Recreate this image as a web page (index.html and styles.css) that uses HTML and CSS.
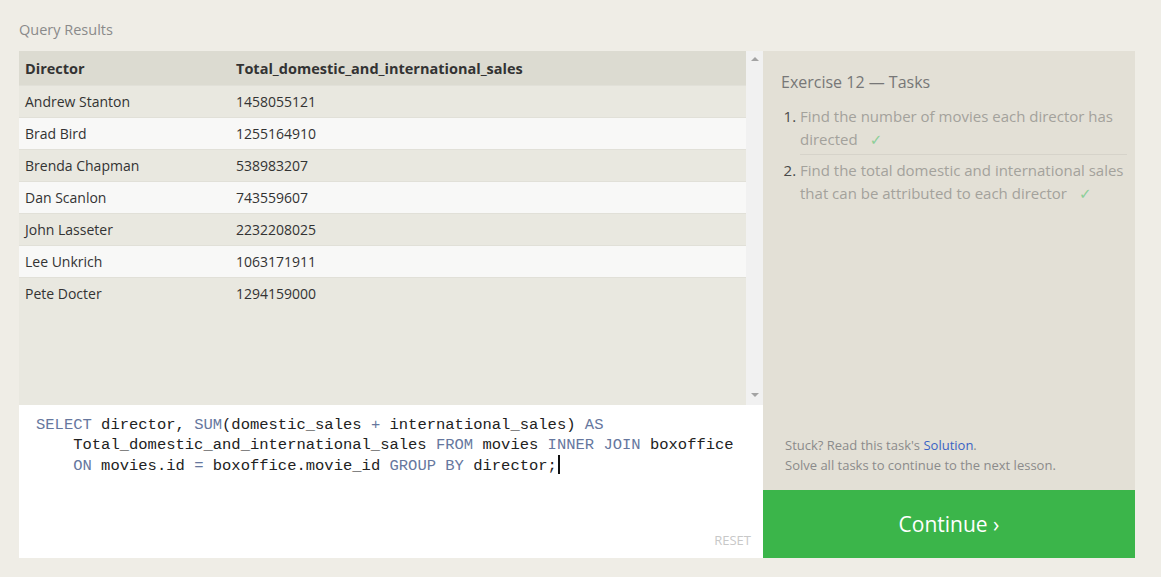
FILE: index.html
```html
<!DOCTYPE html>
<html lang="en">
<head>
<meta charset="utf-8">
<title>Query Results</title>
<link rel="stylesheet" href="styles.css">
</head>
<body>
<div class="page">
  <div class="label">Query Results</div>
  <div class="workspace">
    <div class="left">
      <div class="results">
        <div class="table-wrap">
          <table class="grid">
            <thead>
              <tr><th class="c1">Director</th><th>Total_domestic_and_international_sales</th></tr>
            </thead>
            <tbody>
              <tr><td class="c1">Andrew Stanton</td><td>1458055121</td></tr>
              <tr><td class="c1">Brad Bird</td><td>1255164910</td></tr>
              <tr><td class="c1">Brenda Chapman</td><td>538983207</td></tr>
              <tr><td class="c1">Dan Scanlon</td><td>743559607</td></tr>
              <tr><td class="c1">John Lasseter</td><td>2232208025</td></tr>
              <tr><td class="c1">Lee Unkrich</td><td>1063171911</td></tr>
              <tr><td class="c1">Pete Docter</td><td>1294159000</td></tr>
            </tbody>
          </table>
        </div>
        <div class="scrollbar">
          <span class="arrow up"></span>
          <span class="arrow down"></span>
        </div>
      </div>
      <div class="editor">
        <div class="code">
          <div class="line"><span class="kw">SELECT</span> director, <span class="kw">SUM</span>(domestic_sales <span class="kw">+</span> international_sales) <span class="kw">AS</span></div>
          <div class="line cont">Total_domestic_and_international_sales <span class="kw">FROM</span> movies <span class="kw">INNER JOIN</span> boxoffice</div>
          <div class="line cont"><span class="kw">ON</span> movies.id <span class="kw">=</span> boxoffice.movie_id <span class="kw">GROUP BY</span> director;<span class="cursor"></span></div>
        </div>
        <div class="reset">RESET</div>
      </div>
    </div>
    <div class="right">
      <div class="tasks">
        <div class="title">Exercise 12 — Tasks</div>
        <ol class="task-list">
          <li>Find the number of movies each director has directed<span class="check">✓</span></li>
          <li>Find the total domestic and international sales that can be attributed to each director<span class="check">✓</span></li>
        </ol>
      </div>
      <div class="help">
        <div>Stuck? Read this task's <a class="link">Solution</a>.</div>
        <div>Solve all tasks to continue to the next lesson.</div>
      </div>
      <div class="continue">Continue ›</div>
    </div>
  </div>
</div>
</body>
</html>
```
FILE: styles.css
```css
* { box-sizing: border-box; }
html, body {
  margin: 0;
  padding: 0;
  background: #efede6;
  font-family: "Open Sans", "Noto Sans", sans-serif;
}
.page {
  padding: 19px 0 0 19px;
  width: 1161px;
  height: 577px;
}
.label {
  font-size: 14.5px;
  color: #8a8a8a;
  line-height: 22px;
  height: 32px;
}
.workspace {
  display: flex;
  width: 1116px;
  height: 507px;
}
.left {
  width: 744px;
  display: flex;
  flex-direction: column;
}
.results {
  height: 354px;
  flex-shrink: 0;
  display: flex;
  background: #e9e8e0;
}
.table-wrap {
  flex: 1;
}
.grid {
  width: 100%;
  border-collapse: collapse;
  font-size: 14px;
  color: #333;
}
.grid th {
  background: #dcdbd1;
  text-align: left;
  font-weight: 700;
  font-size: 14.5px;
  height: 34px;
  padding: 1px 6px 0;
  color: #333;
}
.grid td {
  height: 32px;
  padding: 0 6px;
  border-top: 1px solid #e1e0d8;
}
.grid .c1 { width: 211px; }
.grid tbody tr:nth-child(odd) td { background: #e9e8e0; }
.grid tbody tr:nth-child(even) td { background: #f8f8f7; }
.scrollbar {
  width: 17px;
  background: #f1f1f1;
  display: flex;
  flex-direction: column;
  justify-content: space-between;
  align-items: center;
  padding: 6px 0 8px;
}
.arrow {
  width: 0;
  height: 0;
  border-left: 4px solid transparent;
  border-right: 4px solid transparent;
}
.arrow.up { border-bottom: 4px solid #a3a3a3; }
.arrow.down { border-top: 4px solid #a3a3a3; }
.editor {
  flex: 1;
  min-height: 0;
  background: #fff;
  display: flex;
  flex-direction: column;
  padding: 10px 12px 9px 17px;
}
.code {
  font-family: "Liberation Mono", "DejaVu Sans Mono", monospace;
  font-size: 15.5px;
  line-height: 20px;
  color: #222;
}
.line { white-space: pre; height: 20px; }
.line.cont { padding-left: 4ch; }
.kw { color: #66779e; }
.cursor {
  display: inline-block;
  width: 2px;
  height: 19px;
  background: #111;
  vertical-align: -4px;
  margin-left: 1px;
}
.reset {
  margin-top: auto;
  align-self: flex-end;
  font-size: 13px;
  color: #c8c8c8;
  line-height: 18px;
}
.right {
  width: 372px;
  background: #e3e0d6;
  display: flex;
  flex-direction: column;
}
.tasks {
  padding: 20px 8px 0 18px;
  flex: 1;
}
.title {
  font-size: 16px;
  line-height: 22px;
  color: #777;
}
.task-list {
  margin: 12px 0 0;
  padding-left: 19px;
  font-size: 15px;
  line-height: 23px;
  color: #a3a29c;
}
.task-list li {
  padding: 0 0 3px;
  border-bottom: 1px solid #d6d3ca;
}
.task-list li + li {
  padding-top: 4px;
  border-bottom: none;
}
.task-list li::marker { color: #4a4a4a; }
.check {
  display: inline-block;
  color: #8ccf98;
  margin-left: 12px;
  font-size: 15px;
  line-height: 1;
  font-family: "DejaVu Sans", sans-serif;
}
.help {
  padding: 0 18px 15px 22px;
  font-size: 13px;
  line-height: 20px;
  color: #8b8b8b;
}
.link { color: #3a63c4; }
.continue {
  height: 68px;
  background: #3bb54a;
  color: #fff;
  font-size: 21px;
  display: flex;
  align-items: center;
  justify-content: center;
}
```
